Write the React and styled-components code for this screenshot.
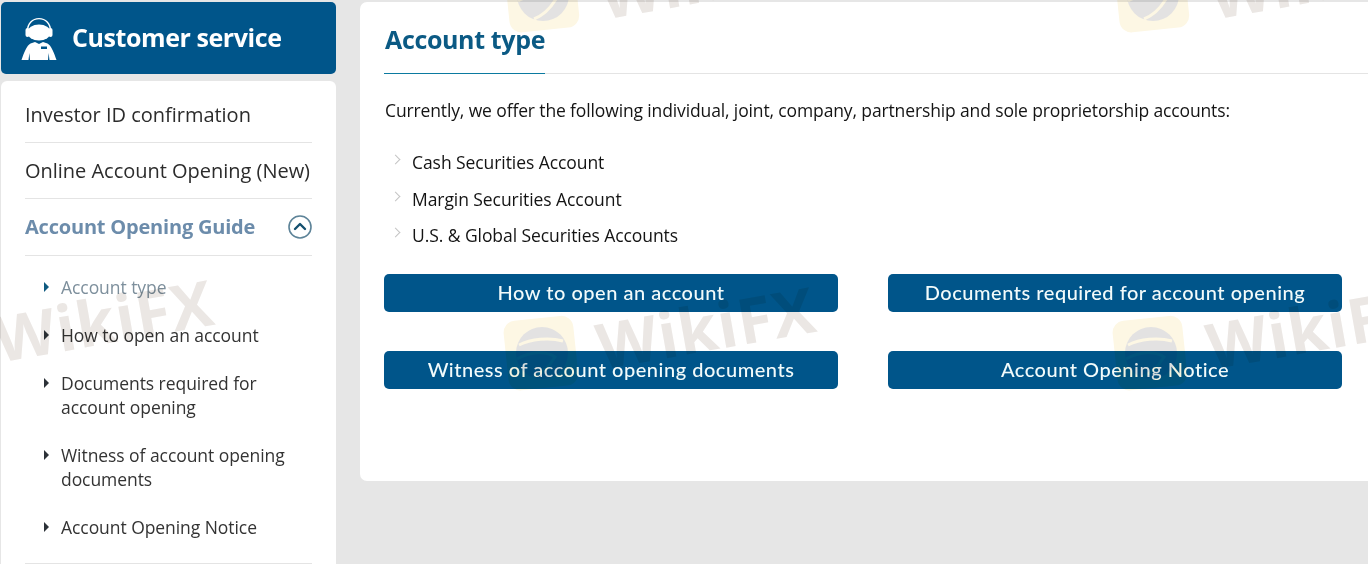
import styled, { createGlobalStyle } from 'styled-components';

const GlobalStyle = createGlobalStyle`
  * {
    box-sizing: border-box;
  }
  html, body {
    margin: 0;
    padding: 0;
    height: 100%;
    overflow: hidden;
    background: #e6e6e6;
    font-family: "Open Sans", "Noto Sans", "Liberation Sans", sans-serif;
  }
`;

const Page = styled.div`
  position: relative;
  width: 1368px;
  height: 564px;
  overflow: hidden;
  display: flex;
  align-items: flex-start;
  gap: 24px;
  padding: 2px 0 0 1px;
`;

const Sidebar = styled.aside`
  width: 335px;
  flex: none;
  display: flex;
  flex-direction: column;
  gap: 7px;
`;

const SideHeader = styled.div`
  height: 72px;
  display: flex;
  align-items: center;
  gap: 15px;
  padding-left: 20px;
  background: #00558a;
  border-radius: 5px;
  color: #fff;
`;

const SideTitle = styled.h2`
  margin: -2px 0 0;
  font-size: 25px;
  font-weight: 700;
  letter-spacing: -0.42px;
`;

const SideMenu = styled.nav`
  height: 490px;
  padding: 6px 24px 0;
  background: #fff;
  border-radius: 6px 6px 0 0;
`;

const MenuRow = styled.div`
  height: ${(p) => (p.$active ? '57px' : '56px')};
  padding-bottom: ${(p) => (p.$active ? '1px' : '0')};
  display: flex;
  align-items: center;
  justify-content: space-between;
  border-bottom: 1px solid #e4e4e4;
  font-size: 20px;
  letter-spacing: ${(p) => (p.$active ? '-0.2px' : '-0.02px')};
  font-weight: ${(p) => (p.$active ? 700 : 400)};
  color: ${(p) => (p.$active ? '#6c8cab' : '#2c2c2c')};
  white-space: nowrap;
`;

const SubMenu = styled.ul`
  list-style: none;
  margin: 0;
  padding: 19px 0 24px 36px;
  display: flex;
  flex-direction: column;
  gap: 24px;
  border-bottom: 1px solid #e4e4e4;
`;

const SubItem = styled.li`
  position: relative;
  font-size: 17.5px;
  line-height: 24px;
  letter-spacing: -0.06px;
  color: ${(p) => (p.$active ? '#7d8f9c' : '#333')};

  &::before {
    content: '';
    position: absolute;
    left: -17px;
    top: 7px;
    border-left: 5px solid ${(p) => (p.$active ? '#0f5a80' : '#2c3238')};
    border-top: 5px solid transparent;
    border-bottom: 5px solid transparent;
  }
`;

const Main = styled.main`
  flex: 1;
  height: 479px;
  padding: 0 0 0 24px;
  background: #fff;
  border-radius: 7px 0 0 7px;
`;

const TitleBar = styled.div`
  height: 72px;
  border-bottom: 1px solid #e4e4e4;
`;

const Title = styled.h1`
  display: inline-block;
  width: 161px;
  height: 72px;
  margin: 0;
  padding: 19px 0 0 1px;
  font-size: 25px;
  line-height: 36px;
  font-weight: 700;
  letter-spacing: -0.35px;
  color: #0b5a84;
  border-bottom: 1px solid #0b7aa0;
  vertical-align: top;
  white-space: nowrap;
`;

const Intro = styled.p`
  margin: 23px 0 0 1px;
  font-size: 17.5px;
  line-height: 26px;
  letter-spacing: -0.13px;
  color: #141414;
  white-space: nowrap;
`;

const AccountList = styled.ul`
  list-style: none;
  margin: 21px 0 0;
  padding: 0 0 0 28px;
`;

const AccountItem = styled.li`
  position: relative;
  font-size: 17.5px;
  line-height: 36.5px;
  letter-spacing: -0.07px;
  color: #141414;

  &::before {
    content: '';
    position: absolute;
    left: -20px;
    top: 12px;
    width: 6px;
    height: 6px;
    border-top: 1px solid #c4c4c4;
    border-right: 1px solid #c4c4c4;
    transform: rotate(45deg);
  }
`;

const ButtonGrid = styled.div`
  margin-top: 20px;
  width: 958px;
  display: grid;
  grid-template-columns: 454px 454px;
  column-gap: 50px;
  row-gap: 39px;
`;

const LinkButton = styled.button`
  height: 38px;
  padding: 0 0 2px;
  border: 0;
  border-radius: 5px;
  background: #00558a;
  color: #f2fbfb;
  font-family: Lato, "Open Sans", sans-serif;
  font-size: 20px;
  font-weight: 500;
  letter-spacing: 0.52px;
`;

const Watermarks = styled.div`
  position: absolute;
  inset: 0;
  pointer-events: none;
  mix-blend-mode: multiply;
`;

const MarkText = styled.span`
  position: absolute;
  left: ${(p) => p.$x}px;
  top: ${(p) => p.$y}px;
  font-family: "Open Sans", sans-serif;
  font-size: 63px;
  line-height: 80px;
  font-weight: 700;
  letter-spacing: 1px;
  color: #ebe7e4;
  transform: rotate(-10deg);
  transform-origin: left center;
  white-space: nowrap;
`;

const MarkLogo = styled.svg`
  position: absolute;
  left: ${(p) => p.$x}px;
  top: ${(p) => p.$y}px;
  width: 78px;
  height: 78px;
`;

function AgentIcon() {
  return (
    <svg width="36" height="43" viewBox="0 0 36 43" fill="none">
      <path d="M6.5 14C6.5 6.5 11.5 1.6 18 1.6S29.5 6.5 29.5 14" stroke="#fff" strokeWidth="1.4" />
      <rect x="4.5" y="11" width="4" height="9" rx="2" fill="#fff" />
      <rect x="27.5" y="11" width="4" height="9" rx="2" fill="#fff" />
      <ellipse cx="18" cy="15.5" rx="11.5" ry="8" fill="#fff" />
      <path
        d="M9.5 26.5L14 25L18 27L22 25L26.5 26.5C30 28 33.5 37 35.5 43H28.5L27.6 36L27 43H9L8.4 36L7.5 43H0.5C2.5 37 6 28 9.5 26.5Z"
        fill="#fff"
      />
      <rect x="20" y="29.5" width="6" height="2.5" fill="#00558a" />
    </svg>
  );
}

function CollapseIcon() {
  return (
    <svg width="24" height="24" viewBox="0 0 24 24" fill="none">
      <circle cx="12" cy="12" r="11" stroke="#5d8398" strokeWidth="1.6" />
      <path d="M7 14L12 9L17 14" stroke="#14506f" strokeWidth="2.4" strokeLinecap="round" strokeLinejoin="round" />
    </svg>
  );
}

function WikiLogo({ x, y }) {
  return (
    <MarkLogo $x={x} $y={y} viewBox="0 0 78 78">
      <rect x="3" y="3" width="70" height="70" rx="12" fill="#fdf7e4" transform="rotate(-6 39 39)" />
      <circle cx="39" cy="38" r="26" fill="#e3e2e2" />
      <path d="M16 30C28 24 46 22 60 26M14 44C28 36 44 36 52 42C46 52 40 58 30 62" stroke="#fdf7e4" strokeWidth="3" fill="none" />
    </MarkLogo>
  );
}

const subItems = [
  { label: 'Account type', active: true },
  { label: 'How to open an account' },
  { label: <>Documents required for<br />account opening</> },
  { label: <>Witness of account opening<br />documents</> },
  { label: 'Account Opening Notice' },
];

const accounts = ['Cash Securities Account', 'Margin Securities Account', 'U.S. & Global Securities Accounts'];

const buttons = [
  'How to open an account',
  'Documents required for account opening',
  'Witness of account opening documents',
  'Account Opening Notice',
];

export default function App() {
  return (
    <Page>
      <GlobalStyle />
      <Sidebar>
        <SideHeader>
          <AgentIcon />
          <SideTitle>Customer service</SideTitle>
        </SideHeader>
        <SideMenu>
          <MenuRow>Investor ID confirmation</MenuRow>
          <MenuRow>Online Account Opening (New)</MenuRow>
          <MenuRow $active>
            Account Opening Guide
            <CollapseIcon />
          </MenuRow>
          <SubMenu>
            {subItems.map((item, i) => (
              <SubItem key={i} $active={item.active}>
                {item.label}
              </SubItem>
            ))}
          </SubMenu>
        </SideMenu>
      </Sidebar>
      <Main>
        <TitleBar>
          <Title>Account type</Title>
        </TitleBar>
        <Intro>
          Currently, we offer the following individual, joint, company, partnership and sole proprietorship accounts:
        </Intro>
        <AccountList>
          {accounts.map((a) => (
            <AccountItem key={a}>{a}</AccountItem>
          ))}
        </AccountList>
        <ButtonGrid>
          {buttons.map((b) => (
            <LinkButton key={b}>{b}</LinkButton>
          ))}
        </ButtonGrid>
      </Main>
      <Watermarks>
        <MarkText $x={-5} $y={299}>WikiFX</MarkText>
        <WikiLogo x={504} y={-43} />
        <MarkText $x={600} $y={-44}>WikiFX</MarkText>
        <WikiLogo x={1114} y={-43} />
        <MarkText $x={1210} $y={-44}>WikiFX</MarkText>
        <WikiLogo x={503} y={315} />
        <MarkText $x={597} $y={306}>WikiFX</MarkText>
        <WikiLogo x={1112} y={315} />
        <MarkText $x={1207} $y={306}>WikiFX</MarkText>
      </Watermarks>
    </Page>
  );
}
